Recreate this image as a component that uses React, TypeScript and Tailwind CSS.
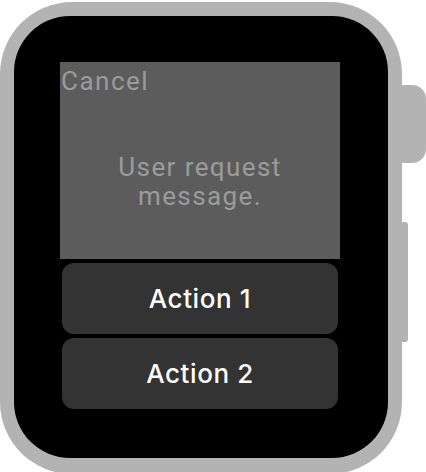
import React from "react";

export default function App() {
  return (
    <div className="w-[426px] h-[472px] bg-white flex items-start overflow-hidden" style={{ fontFamily: "Roboto, 'Liberation Sans', sans-serif" }}>
      <div className="w-[402px] h-[472px] mt-[2px] shrink-0 rounded-[72px] bg-[#b3b3b3] p-[14px]">
        <div className="w-[374px] h-[442px] rounded-[56px] bg-black pt-[46px] pl-[46px]">
          <div className="w-[280px] flex flex-col items-center">
            <div className="w-[280px] h-[197px] bg-[#5c5c5c] flex flex-col">
              <div className="text-[26px] leading-[30px] tracking-[1.5px] text-[#9b9b9b] mt-[4px] pl-[1px]">Cancel</div>
              <div className="mt-[57px] text-center text-[26px] leading-[29px] tracking-[1.4px] text-[#9b9b9b]">
                User request
                <br />
                message.
              </div>
            </div>
            <div className="mt-[4px] w-[276px] h-[71px] rounded-[12px] bg-[#333333] flex items-center justify-center text-white text-[26px] font-medium tracking-[0.6px] font-['Inter',sans-serif]">
              Action 1
            </div>
            <div className="mt-[4px] w-[276px] h-[71px] rounded-[12px] bg-[#333333] flex items-center justify-center text-white text-[26px] font-medium tracking-[0.6px] font-['Inter',sans-serif]">
              Action 2
            </div>
          </div>
        </div>
      </div>
      <div className="flex flex-col items-start pt-[85px]">
        <div className="w-[24px] h-[78px] bg-[#b3b3b3] rounded-r-[14px]" />
        <div className="mt-[59px] w-[6px] h-[120px] bg-[#b3b3b3] rounded-r-[3px]" />
      </div>
    </div>
  );
}
